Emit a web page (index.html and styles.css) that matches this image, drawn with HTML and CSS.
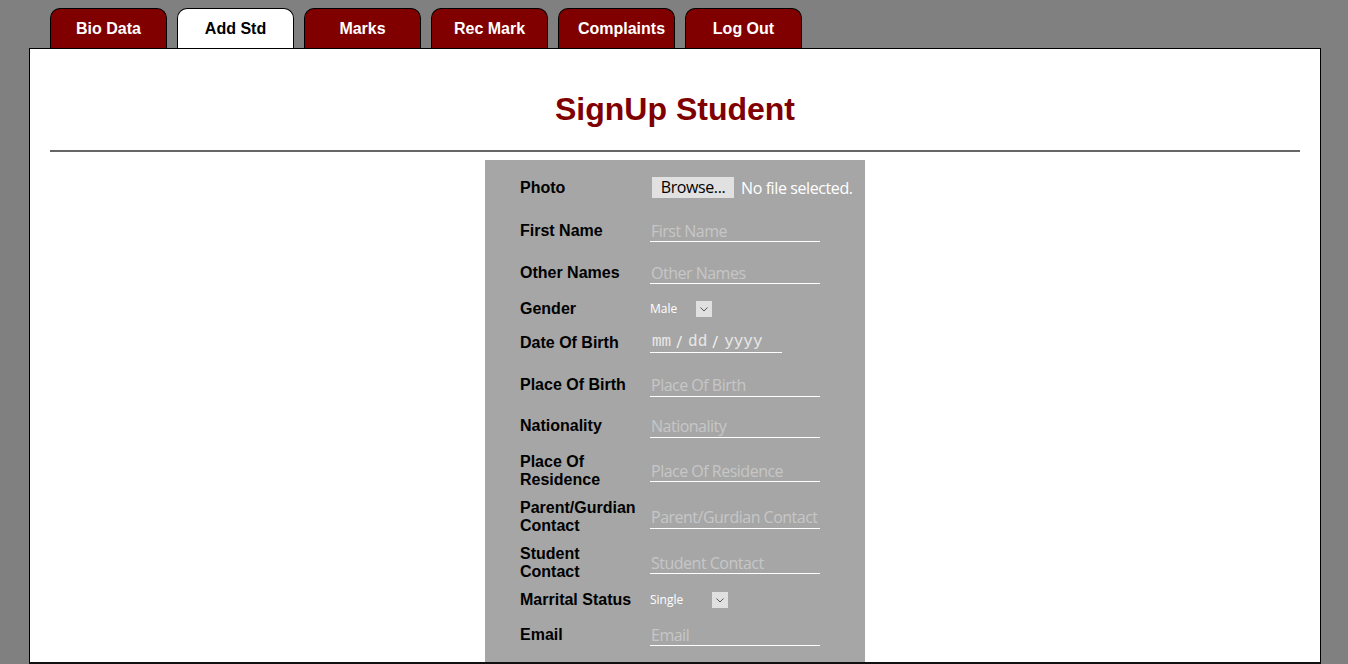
FILE: index.html
```html
<!DOCTYPE html>
<html>
<head>
<meta charset="utf-8">
<title>SignUp Student</title>
<link rel="stylesheet" href="styles.css">
</head>
<body>
<nav class="tabs">
  <a class="tab">Bio Data</a>
  <a class="tab active">Add Std</a>
  <a class="tab">Marks</a>
  <a class="tab">Rec Mark</a>
  <a class="tab tab-pad">Complaints</a>
  <a class="tab">Log Out</a>
</nav>
<main class="sheet">
  <h1 class="title">SignUp Student</h1>
  <hr class="rule">
  <form class="panel">
    <div class="form-grid">
      <label class="lbl">Photo</label>
      <div class="ctl file"><span class="browse">Browse...</span><span class="nofile">No file selected.</span></div>

      <label class="lbl">First Name</label>
      <div class="ctl"><input class="txt" type="text" placeholder="First Name"></div>

      <label class="lbl">Other Names</label>
      <div class="ctl"><input class="txt" type="text" placeholder="Other Names"></div>

      <label class="lbl">Gender</label>
      <div class="ctl"><div class="sel sel-gender"><span class="sel-val">Male</span><span class="sel-btn"><svg width="8" height="5" viewBox="0 0 8 5"><path d="M0.5 0.5 L4 4 L7.5 0.5" fill="none" stroke="#555" stroke-width="1"/></svg></span></div></div>

      <label class="lbl">Date Of Birth</label>
      <div class="ctl"><div class="date"><span class="dp">mm</span><span class="ds">/</span><span class="dp">dd</span><span class="ds">/</span><span class="dp">yyyy</span></div></div>

      <label class="lbl">Place Of Birth</label>
      <div class="ctl"><input class="txt" type="text" placeholder="Place Of Birth"></div>

      <label class="lbl">Nationality</label>
      <div class="ctl"><input class="txt" type="text" placeholder="Nationality"></div>

      <label class="lbl">Place Of Residence</label>
      <div class="ctl"><input class="txt" type="text" placeholder="Place Of Residence"></div>

      <label class="lbl">Parent/Gurdian Contact</label>
      <div class="ctl"><input class="txt" type="text" placeholder="Parent/Gurdian Contact"></div>

      <label class="lbl">Student Contact</label>
      <div class="ctl"><input class="txt" type="text" placeholder="Student Contact"></div>

      <label class="lbl">Marrital Status</label>
      <div class="ctl"><div class="sel sel-status"><span class="sel-val">Single</span><span class="sel-btn"><svg width="8" height="5" viewBox="0 0 8 5"><path d="M0.5 0.5 L4 4 L7.5 0.5" fill="none" stroke="#555" stroke-width="1"/></svg></span></div></div>

      <label class="lbl">Email</label>
      <div class="ctl"><input class="txt" type="text" placeholder="Email"></div>
    </div>
  </form>
</main>
</body>
</html>
```
FILE: styles.css
```css
html, body {
  margin: 0;
  padding: 0;
  background: #808080;
  height: 664px;
  overflow: hidden;
}

body {
  font-family: "Liberation Sans", Arial, sans-serif;
}

.tabs {
  display: flex;
  gap: 10px;
  padding: 8px 0 0 50px;
  height: 40px;
}

.tab {
  box-sizing: border-box;
  width: 117px;
  height: 40px;
  background: #800000;
  color: #fff;
  border: 1px solid #000;
  border-bottom: none;
  border-radius: 10px 10px 0 0;
  display: flex;
  align-items: center;
  justify-content: center;
  font-weight: bold;
  font-size: 16px;
  padding-top: 1px;
}

.tab-pad {
  padding-left: 10px;
}

.tab.active {
  background: #fff;
  color: #000;
}

.sheet {
  box-sizing: border-box;
  margin: 0 27px 0 29px;
  height: 616px;
  background: #fff;
  border: 1px solid #000;
  border-bottom: 2px solid #111;
  display: flex;
  flex-direction: column;
  overflow: hidden;
}

.title {
  margin: 42px 0 0;
  text-align: center;
  color: #800000;
  font-size: 32px;
  line-height: 37px;
  font-weight: bold;
}

.rule {
  margin: 22px 20px 8px;
  border: none;
  border-top: 2px solid #666;
  height: 0;
}

.panel {
  align-self: center;
  width: 380px;
  flex: 1;
  background: #a6a6a6;
  box-sizing: border-box;
  padding: 6px 0 0 35px;
  margin: 0;
}

.form-grid {
  display: grid;
  grid-template-columns: 120px 1fr;
  column-gap: 10px;
  grid-template-rows: 43px 42px 42px 30px 38px 47px 35px 54px 39px 52px 22px 48px;
  align-items: center;
}

.lbl {
  font-weight: bold;
  font-size: 16px;
  color: #000;
  line-height: 18px;
  padding-top: 1px;
}

.ctl {
  display: flex;
  align-items: center;
}

.file {
  gap: 7px;
  font-family: "Open Sans", sans-serif;
  font-size: 16px;
  letter-spacing: -0.4px;
}

.browse {
  margin-left: 2px;
  width: 82px;
  height: 21px;
  background: #e1e1e1;
  color: #000;
  display: flex;
  align-items: center;
  justify-content: center;
  line-height: 21px;
}

.nofile {
  color: #fff;
  white-space: nowrap;
}

.txt {
  box-sizing: border-box;
  width: 170px;
  height: 22px;
  margin: 2px 0 0;
  padding: 0 1px;
  border: none;
  border-bottom: 1px solid #fff;
  background: transparent;
  font-family: "Open Sans", sans-serif;
  font-size: 16px;
  letter-spacing: -0.5px;
  color: #fff;
  outline: none;
}

.txt::placeholder {
  color: #c6c6c6;
}

.sel {
  display: flex;
  align-items: center;
  justify-content: space-between;
  height: 16px;
  margin-top: 2px;
  font-family: "Open Sans", sans-serif;
  font-size: 12px;
  color: #fff;
}

.sel-gender { width: 62px; }
.sel-status { width: 78px; }

.sel-val {
  line-height: 16px;
}

.sel-btn {
  width: 16px;
  height: 16px;
  background: #e0e0e0;
  display: flex;
  align-items: center;
  justify-content: center;
}

.date {
  box-sizing: border-box;
  width: 132px;
  height: 21px;
  margin-top: 1px;
  border-bottom: 1px solid #fff;
  display: flex;
  align-items: center;
  padding-left: 2px;
  color: #e8e8e8;
}

.dp {
  font-family: "Liberation Mono", monospace;
  font-size: 16px;
}

.ds {
  font-family: "Open Sans", sans-serif;
  font-size: 16px;
  color: #f2f2f2;
  margin: 0 6px 0 5px;
}
```
